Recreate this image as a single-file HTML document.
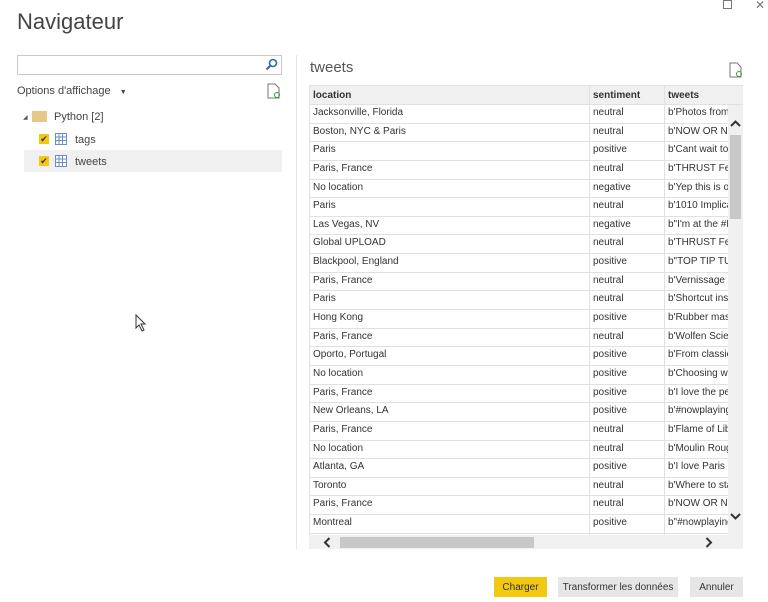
<!DOCTYPE html>
<html><head><meta charset="utf-8"><style>
body{margin:0;width:768px;height:602px;background:#fff;font-family:"Liberation Sans",sans-serif;position:relative;overflow:hidden;color:#333}
.a{position:absolute}
table{border-collapse:collapse;font-size:10px;table-layout:fixed}
td{height:15.65px;padding:2px 0 0 3px;border:1px solid #e1e1e1;white-space:nowrap;overflow:hidden;color:#333;vertical-align:top}
th{height:18px;text-align:left;padding:0 0 0 3px;background:#f0f0f0;border:1px solid #e1e1e1;font-size:10px;font-weight:bold;color:#333}
.btn{position:absolute;top:577px;height:20px;font-size:10px;line-height:21px;text-align:center;background:#e6e6e6;color:#333}
</style></head><body>
<div class="a" style="left:17px;top:9px;font-size:22px;color:#444">Navigateur</div>
<div class="a" style="left:723px;top:0px;width:7px;height:7px;border:1px solid #777"></div>
<div class="a" style="left:755px;top:-2px;font-size:12px;color:#777">✕</div>
<div class="a" style="left:17px;top:55px;width:263px;height:18px;border:1px solid #c8c8c8"></div>
<svg class="a" style="left:265px;top:58px" width="13" height="13"><circle cx="8" cy="5" r="3.5" fill="none" stroke="#2b6cb0" stroke-width="1.6"/><line x1="5.5" y1="7.5" x2="1.5" y2="11.5" stroke="#2b6cb0" stroke-width="2"/></svg>
<div class="a" style="left:17px;top:85px;font-size:11px;color:#444">Options d'affichage <span style="font-size:7px;margin-left:6px">▼</span></div>
<svg class="a" style="left:267px;top:83px" width="14" height="16"><path d="M1 1h7l4 4v10H1z" fill="#fff" stroke="#777"/><circle cx="10" cy="12" r="2.5" fill="none" stroke="#3a9a3a"/></svg>
<div class="a" style="left:23px;top:114px;font-size:6px;color:#555">◢</div>
<div class="a" style="left:32px;top:111px;width:15px;height:11px;background:#e8c88a"></div>
<div class="a" style="left:54px;top:111px;font-size:11px;color:#444">Python [2]</div>
<div class="a" style="left:24px;top:150px;width:258px;height:22px;background:#f0f0f0"></div>
<div class="a" style="left:39px;top:134px;width:10px;height:10px;background:#f2c811;font-size:9px;line-height:10px;text-align:center">✔</div>
<div class="a" style="left:39px;top:156px;width:10px;height:10px;background:#f2c811;font-size:9px;line-height:10px;text-align:center">✔</div>
<svg class="a" style="left:55px;top:133px" width="12" height="12"><rect x=".5" y=".5" width="11" height="11" fill="#fff" stroke="#6b8cc4"/><path d="M.5 4h11M.5 7.5h11M4 .5v11M7.5 .5v11" stroke="#6b8cc4"/></svg>
<svg class="a" style="left:55px;top:155px" width="12" height="12"><rect x=".5" y=".5" width="11" height="11" fill="#fff" stroke="#6b8cc4"/><path d="M.5 4h11M.5 7.5h11M4 .5v11M7.5 .5v11" stroke="#6b8cc4"/></svg>
<div class="a" style="left:75px;top:134px;font-size:11px;color:#444">tags</div>
<div class="a" style="left:75px;top:156px;font-size:11px;color:#444">tweets</div>
<div class="a" style="left:296px;top:55px;width:1px;height:494px;background:#e6e6e6"></div>
<div class="a" style="left:310px;top:59px;font-size:15px;color:#555">tweets</div>
<svg class="a" style="left:729px;top:62px" width="14" height="16"><path d="M1 1h7l4 4v10H1z" fill="#fff" stroke="#777"/><circle cx="10" cy="12" r="2.5" fill="none" stroke="#3a9a3a"/></svg>
<div class="a" style="left:309px;top:85px;width:434px;height:464px;overflow:hidden">
<table style="width:434px">
<colgroup><col style="width:280px"><col style="width:75px"><col style="width:79px"></colgroup>
<tr><th>location</th><th>sentiment</th><th>tweets</th></tr>
<tr><td>Jacksonville, Florida</td><td>neutral</td><td>b'Photos from</td></tr>
<tr><td>Boston, NYC &amp; Paris</td><td>neutral</td><td>b'NOW OR NE</td></tr>
<tr><td>Paris</td><td>positive</td><td>b'Cant wait to</td></tr>
<tr><td>Paris, France</td><td>neutral</td><td>b'THRUST Fee</td></tr>
<tr><td>No location</td><td>negative</td><td>b'Yep this is ou</td></tr>
<tr><td>Paris</td><td>neutral</td><td>b'1010 Implica</td></tr>
<tr><td>Las Vegas, NV</td><td>negative</td><td>b"I'm at the #I</td></tr>
<tr><td>Global UPLOAD</td><td>neutral</td><td>b'THRUST Fee</td></tr>
<tr><td>Blackpool, England</td><td>positive</td><td>b"TOP TIP TUE</td></tr>
<tr><td>Paris, France</td><td>neutral</td><td>b'Vernissage d</td></tr>
<tr><td>Paris</td><td>neutral</td><td>b'Shortcut insi</td></tr>
<tr><td>Hong Kong</td><td>positive</td><td>b'Rubber mask</td></tr>
<tr><td>Paris, France</td><td>neutral</td><td>b'Wolfen Scier</td></tr>
<tr><td>Oporto, Portugal</td><td>positive</td><td>b'From classic</td></tr>
<tr><td>No location</td><td>positive</td><td>b'Choosing wh</td></tr>
<tr><td>Paris, France</td><td>positive</td><td>b'I love the pe</td></tr>
<tr><td>New Orleans, LA</td><td>positive</td><td>b'#nowplaying</td></tr>
<tr><td>Paris, France</td><td>neutral</td><td>b'Flame of Libe</td></tr>
<tr><td>No location</td><td>neutral</td><td>b'Moulin Roug</td></tr>
<tr><td>Atlanta, GA</td><td>positive</td><td>b'I love Paris i</td></tr>
<tr><td>Toronto</td><td>neutral</td><td>b'Where to sta</td></tr>
<tr><td>Paris, France</td><td>neutral</td><td>b'NOW OR NE</td></tr>
<tr><td>Montreal</td><td>positive</td><td>b"#nowplaying</td></tr>
<tr><td>&nbsp;</td><td></td><td></td></tr>
</table>
<div class="a" style="left:419px;top:20px;width:15px;height:430px;background:#f0f0f0"></div>
<div class="a" style="left:421px;top:50px;width:11px;height:84px;background:#c8c8c8"></div>
<svg class="a" style="left:421px;top:35px" width="11" height="8"><path d="M1 6L5.5 1.5 10 6" fill="none" stroke="#333" stroke-width="2"/></svg>
<svg class="a" style="left:421px;top:427px" width="11" height="8"><path d="M1 2L5.5 6.5 10 2" fill="none" stroke="#333" stroke-width="2"/></svg>
<div class="a" style="left:0;top:450px;width:434px;height:14px;background:#f0f0f0"></div>
<div class="a" style="left:31px;top:452px;width:194px;height:11px;background:#c8c8c8"></div>
<svg class="a" style="left:14px;top:452px" width="8" height="11"><path d="M6.5 1L2 5.5 6.5 10" fill="none" stroke="#333" stroke-width="2"/></svg>
<svg class="a" style="left:396px;top:452px" width="8" height="11"><path d="M1.5 1L6 5.5 1.5 10" fill="none" stroke="#333" stroke-width="2"/></svg>
</div>
<div class="btn" style="left:494px;width:53px;background:#f2c811">Charger</div>
<div class="btn" style="left:558px;width:120px">Transformer les données</div>
<div class="btn" style="left:690px;width:53px">Annuler</div>
<svg class="a" style="left:135px;top:314px" width="12" height="18"><path d="M1 1v13l3-3 3 6 2-1-3-6h4z" fill="#fff" stroke="#333"/></svg>
</body></html>
